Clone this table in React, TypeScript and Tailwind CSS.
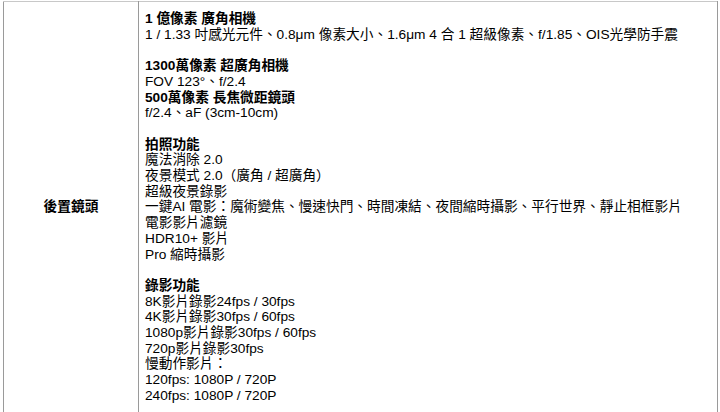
const FONT = '"Liberation Sans", Arial, "Noto Sans CJK TC", sans-serif';

type Line = { text: string; bold?: boolean } | null;

const lines: Line[] = [
  { text: "1 億像素 廣角相機", bold: true },
  { text: "1 / 1.33 吋感光元件、0.8μm 像素大小、1.6μm 4 合 1 超級像素、f/1.85、OIS光學防手震" },
  null,
  { text: "1300萬像素 超廣角相機", bold: true },
  { text: "FOV 123°、f/2.4" },
  { text: "500萬像素 長焦微距鏡頭", bold: true },
  { text: "f/2.4、aF (3cm-10cm)" },
  null,
  { text: "拍照功能", bold: true },
  { text: "魔法消除 2.0" },
  { text: "夜景模式 2.0（廣角 / 超廣角）" },
  { text: "超級夜景錄影" },
  { text: "一鍵AI 電影：魔術變焦、慢速快門、時間凍結、夜間縮時攝影、平行世界、靜止相框影片" },
  { text: "電影影片濾鏡" },
  { text: "HDR10+ 影片" },
  { text: "Pro 縮時攝影" },
  null,
  { text: "錄影功能", bold: true },
  { text: "8K影片錄影24fps / 30fps" },
  { text: "4K影片錄影30fps / 60fps" },
  { text: "1080p影片錄影30fps / 60fps" },
  { text: "720p影片錄影30fps" },
  { text: "慢動作影片：" },
  { text: "120fps: 1080P / 720P" },
  { text: "240fps: 1080P / 720P" },
];

export default function App() {
  return (
    <div className="h-[412px] w-[720px] overflow-hidden bg-white pl-[3px] pt-[1px] text-black" style={{ fontFamily: FONT }}>
      <table className="w-[715px] border-collapse text-[13.7px] leading-[15.7px]">
        <tbody>
          <tr>
            <td className="w-[135px] border border-t-[#c8c8c8] border-x-[#9a9a9a] border-b-[#9a9a9a] text-center align-middle font-bold">
              後置鏡頭
            </td>
            <td className="border border-t-[#c8c8c8] border-x-[#9a9a9a] border-b-[#9a9a9a] pl-[6px] pt-[9px] pb-[9px] align-top">
              {lines.map((l, i) =>
                l ? (
                  <div key={i} className={l.bold ? "font-bold whitespace-nowrap" : "whitespace-nowrap"}>
                    {l.text}
                  </div>
                ) : (
                  <div key={i} className="h-[15.7px]" />
                )
              )}
            </td>
          </tr>
        </tbody>
      </table>
    </div>
  );
}
